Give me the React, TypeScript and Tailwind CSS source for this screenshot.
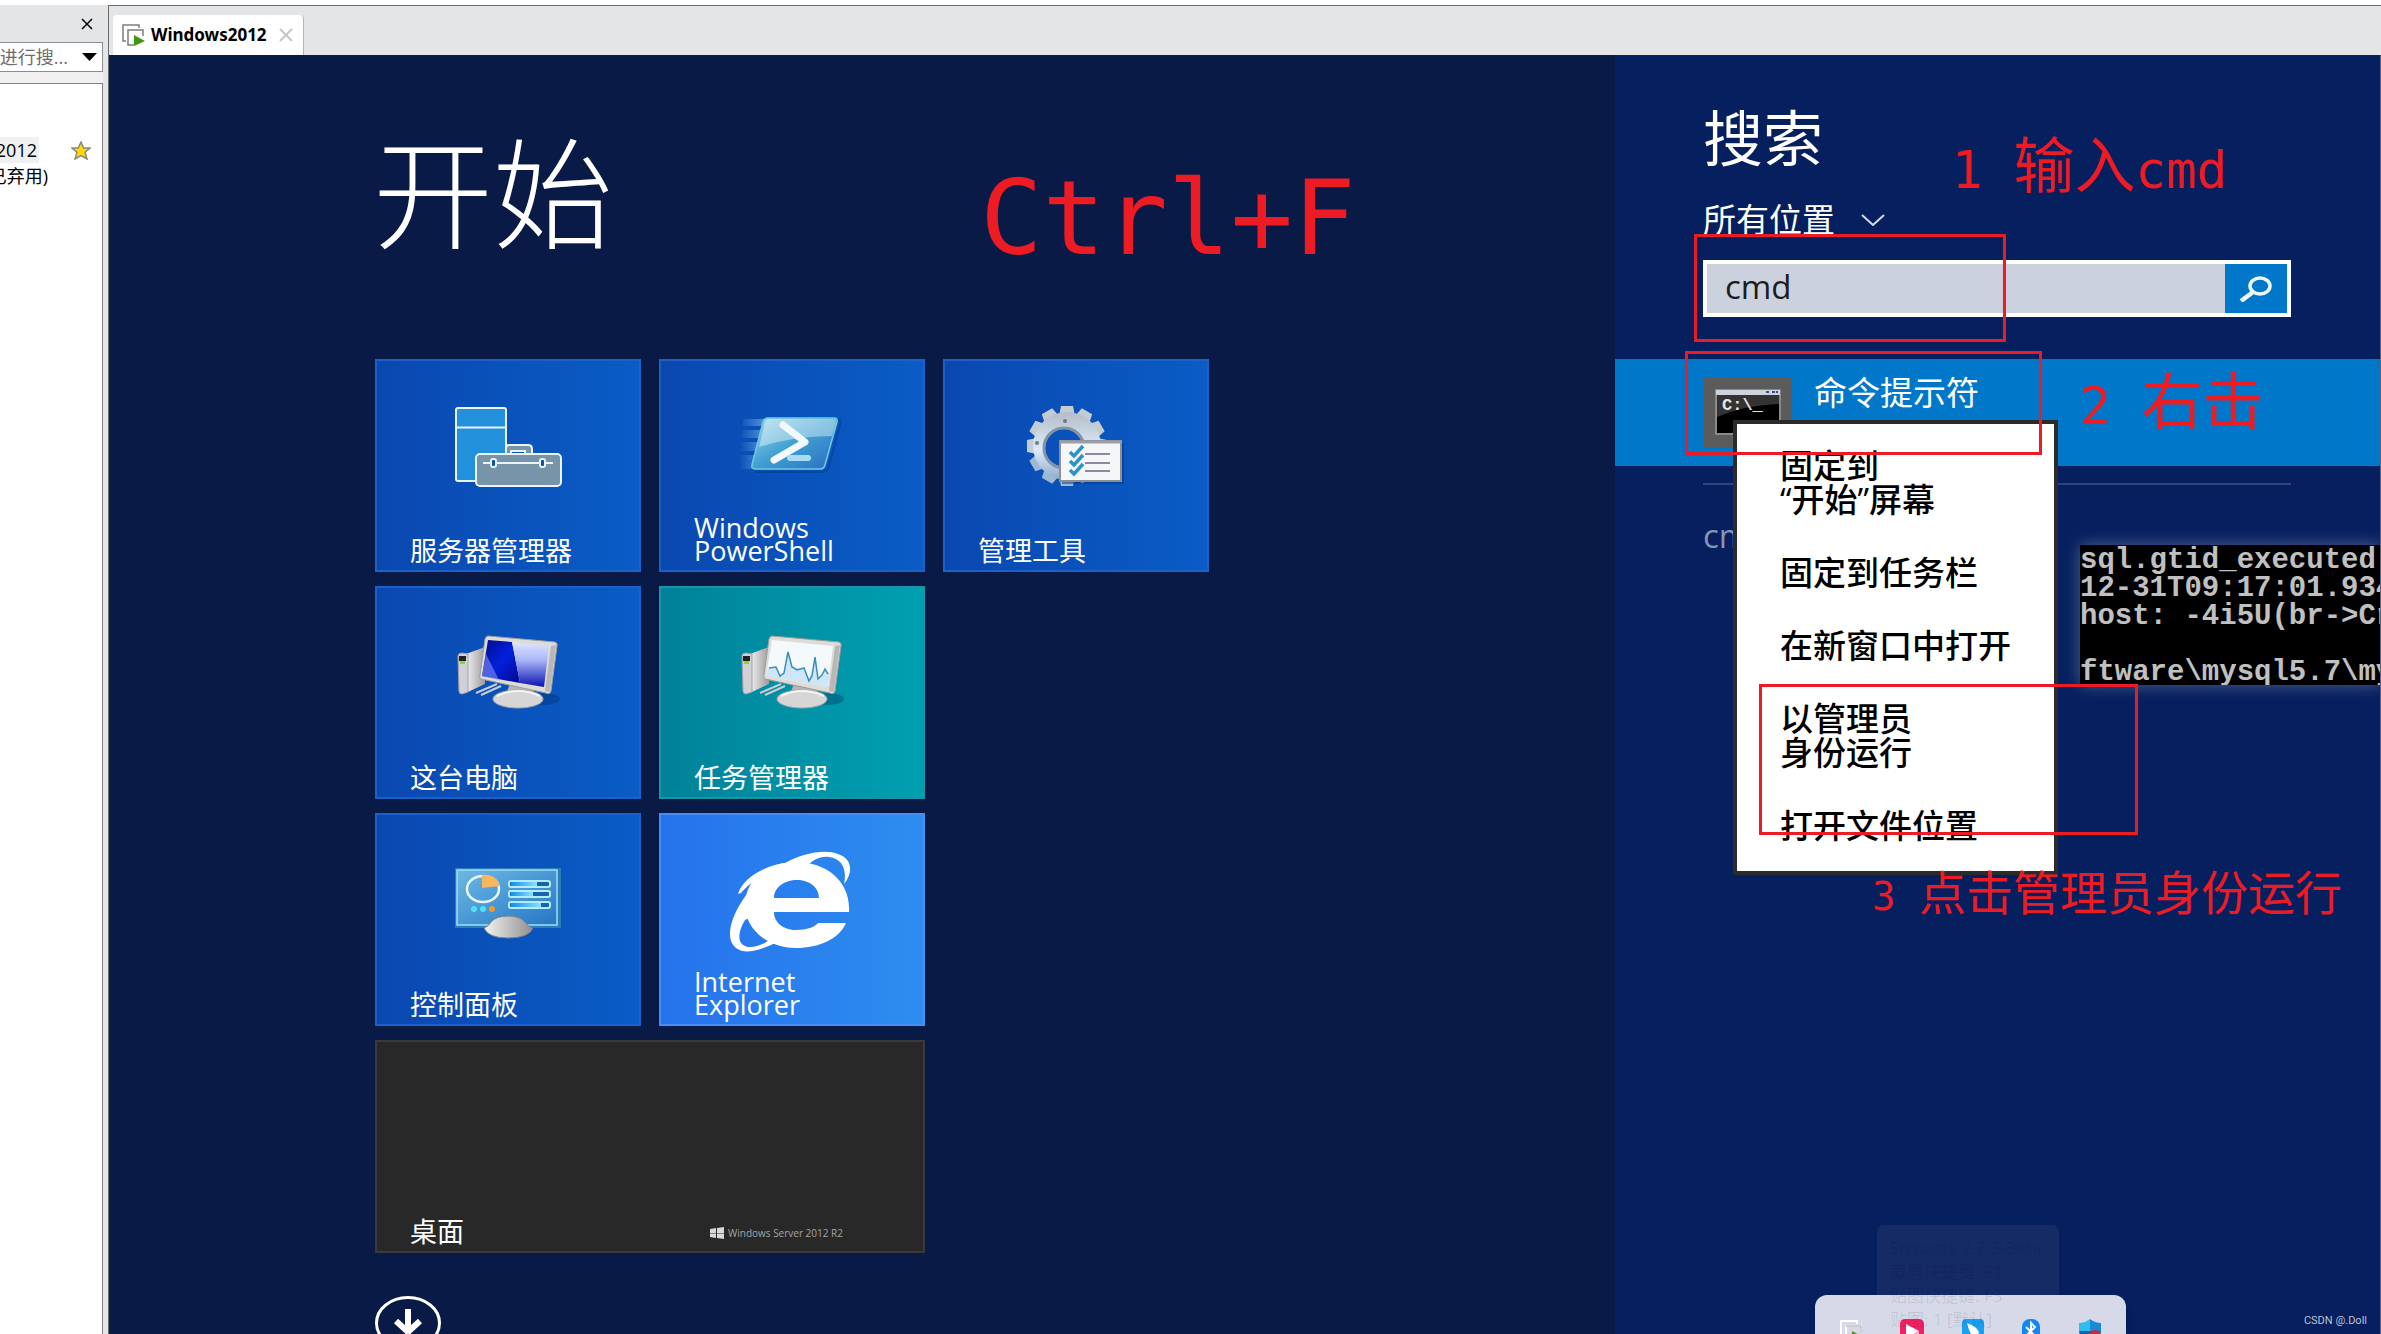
import React from 'react';

const UI = "font-['Open_Sans','Noto_Sans_CJK_SC',sans-serif]";

interface TileProps {
  label: string[];
  tone: string;
  children?: React.ReactNode;
  className?: string;
}

function Tile({ label, tone, children, className = '' }: TileProps) {
  return (
    <button type="button" className={`grid h-[213px] overflow-hidden border-2 text-left text-white ${tone} ${className}`}>
      <svg viewBox="2 2 262 209" className="col-start-1 row-start-1 size-full" fill="none">
        {children}
      </svg>
      <span className="col-start-1 row-start-1 self-end pb-2 pl-[33px] text-[27px] leading-[23px]">
        {label.map((line) => (
          <span key={line} className="block">{line}</span>
        ))}
      </span>
    </button>
  );
}

const BLUE = 'border-[#1b62c8] bg-linear-to-r from-[#0a48b0] to-[#0a5cc6]';
const TEAL = 'border-[#1a94a6] bg-linear-to-r from-[#008299] to-[#00a0b1]';
const SKY = 'border-[#4390f2] bg-linear-to-r from-[#2672ec] to-[#2e8def]';

function ServerIcon() {
  return (
    <g stroke="#e8f3fb" strokeWidth="2">
      <rect x="81" y="49" width="50" height="73" rx="2" fill="#2390dc" />
      <path d="M81 68.500H131" />
      <path d="M131 95V89Q131 86 134 86H153Q157 86 157 90V95" fill="#7894a8" />
      <path d="M136 95V92H150V95" fill="#0a52bb" />
      <rect x="101" y="95" width="85" height="32" rx="4" fill="#7894a8" />
      <path d="M108 104H178" />
      <rect x="116" y="100" width="5" height="8" rx="2" fill="#0a52bb" />
      <rect x="165" y="100" width="5" height="8" rx="2" fill="#0a52bb" />
    </g>
  );
}

function PowerShellIcon() {
  return (
    <>
      <defs>
        <linearGradient id="ps" x1="0" y1="0" x2="1" y2="1">
          <stop offset="0" stopColor="#9fd8ea" />
          <stop offset=".5" stopColor="#3f9fd2" />
          <stop offset="1" stopColor="#2a6cc0" />
        </linearGradient>
        <linearGradient id="streak">
          <stop offset="0" stopColor="#6fb4e6" stopOpacity="0" />
          <stop offset="1" stopColor="#6fb4e6" stopOpacity=".7" />
        </linearGradient>
      </defs>
      <path d="M84 60H107L105 67H84ZM83 71H104L102 79H82ZM82 83H100L98 92H81ZM81 96H97L93 110H80Z" fill="url(#streak)" />
      <path d="M110 61H181Q182 63 181 66L169 110Q167 113 163 113H96" stroke="#063a86" strokeWidth="2" opacity=".5" />
      <path d="M109 59H175Q179 59 178 63L166 106Q165 110 161 110H97Q92 110 93 106L104 63Q105 59 109 59Z" fill="url(#ps)" stroke="#72cbdc" strokeWidth="1.500" />
      <path d="M109 60H175Q178 60 177 63L173 77Q135 77 100 88L106 63Q107 60 109 60Z" fill="#fff" opacity=".4" />
      <path d="M124 66L146 83L115 101" stroke="#f2f9fc" strokeWidth="7" strokeLinecap="round" strokeLinejoin="round" />
      <path d="M131 99H149" stroke="#a8dcf3" strokeWidth="6" strokeLinecap="round" />
    </>
  );
}

function ToolsIcon() {
  const teeth = Array.from({ length: 12 }, (_, i) => i * 30);
  return (
    <>
      <defs>
        <linearGradient id="gear" x1="0" y1="0" x2="0" y2="1">
          <stop offset="0" stopColor="#b4bcc5" />
          <stop offset=".55" stopColor="#dcebfa" />
          <stop offset="1" stopColor="#8dacc9" />
        </linearGradient>
        <mask id="hole">
          <rect width="266" height="213" fill="#fff" />
          <circle cx="121" cy="89" r="19" fill="#000" />
        </mask>
      </defs>
      <g mask="url(#hole)">
        {teeth.map((angle) => (
          <path key={angle} d="M116 57L118 47H130L132 57Z" fill={angle > 90 && angle < 270 ? '#9db8d2' : '#c3cbd4'} transform={`rotate(${angle} 124 87)`} />
        ))}
        <circle cx="124" cy="87" r="34" fill="url(#gear)" />
      </g>
      <circle cx="121" cy="89" r="20" stroke="#8193a6" strokeWidth="3" />
      <circle cx="122" cy="62" r="2" fill="#6c7b8a" />
      <circle cx="94" cy="84" r="2" fill="#6c7b8a" />
      <rect x="119" y="84" width="62" height="41" fill="#06357f" opacity=".5" />
      <rect x="117" y="82" width="61" height="40" fill="#f5f6f7" stroke="#8c8f94" strokeWidth="2" />
      <path d="M117 83H178" stroke="#9aa0a6" strokeWidth="3" />
      <path d="M127 93L131 97L140 87M127 102L131 106L140 96M127 111L131 115L140 105" stroke="#2c94c4" strokeWidth="3.500" />
      <path d="M142 95H167M142 104H167M142 112H167" stroke="#8d86a4" strokeWidth="2" />
    </>
  );
}

function ComputerIcon({ graph = false }: { graph?: boolean }) {
  return (
    <>
      <defs>
        <linearGradient id="case" x1="0" y1="0" x2="1" y2="0">
          <stop offset="0" stopColor="#f1f1f1" />
          <stop offset="1" stopColor="#9c9c9c" />
        </linearGradient>
        <linearGradient id="shine" x1="0" y1="0" x2="0" y2="1">
          <stop offset="0" stopColor="#dfe6ff" />
          <stop offset=".4" stopColor="#a9b6f8" />
          <stop offset="1" stopColor="#0b12b4" />
        </linearGradient>
        <linearGradient id="deep" x1="0" y1="0" x2="1" y2="1">
          <stop offset="0" stopColor="#030a86" />
          <stop offset=".5" stopColor="#0220dc" />
          <stop offset="1" stopColor="#020a90" />
        </linearGradient>
      </defs>
      <ellipse cx="168" cy="113" rx="17" ry="6" fill="#012a5e" opacity=".35" />
      <path d="M101 107L122 98M106 109L126 100" stroke="#c9cdd2" strokeWidth="2" />
      <path d="M91 68L110 61V98L93 106Z" fill="url(#case)" />
      <path d="M83 70Q83 67 87 67L93 68V106L87 108Q84 108 84 105Z" fill="#d0d0d6" stroke="#a2a2aa" />
      <rect x="84" y="70" width="7" height="5" fill="#222" />
      <rect x="85" y="75" width="5" height="3" fill="#7be02a" />
      <path d="M135 98L157 102L160 110L130 110Z" fill="#b5b5b5" />
      <ellipse cx="143" cy="113" rx="25" ry="9" fill="#d6d6d6" stroke="#a9a9a9" />
      <path d="M122 110Q143 100 165 110" stroke="#f4f4f4" strokeWidth="2" />
      <path d="M113 50L180 56Q183 57 182 60L176 105Q175 109 171 107L106 93Q104 92 105 89L110 53Q111 50 113 50Z" fill="#dedcd8" stroke="#9d9c9a" />
      <path d="M176 60L181 59L175 106L170 105Z" fill="#b9b8b6" />
      {graph ? (
        <>
          <path d="M113 54L174 60L169 101L107 90Z" fill="#f4f9fc" />
          <path d="M109 82L117 81L121 90L125 87L129 68L133 81L145 83L150 94L156 74L159 93L166 84L171 88L169 101L107 90Z" fill="#cfe6f4" />
          <path d="M110 82L117 81L121 90L125 87L129 66L133 81L138 84L145 82L150 95L153 90L156 71L159 93L163 89L166 83L169 88" stroke="#3a8dbd" strokeWidth="1.500" />
        </>
      ) : (
        <>
          <path d="M113 54L137 56L145 97L107 90Z" fill="url(#deep)" />
          <path d="M137 56L174 60L169 101L145 97Z" fill="url(#shine)" />
          <path d="M111 68L124 94L107 90Z" fill="#8490f0" opacity=".6" />
        </>
      )}
    </>
  );
}

function ControlPanelIcon() {
  return (
    <>
      <defs>
        <linearGradient id="panel" x1="0" y1="0" x2="1" y2="1">
          <stop offset="0" stopColor="#6db9e4" />
          <stop offset="1" stopColor="#2577c4" />
        </linearGradient>
        <linearGradient id="dome">
          <stop offset="0" stopColor="#f4f4f4" />
          <stop offset="1" stopColor="#8e8e8e" />
        </linearGradient>
        <linearGradient id="bar">
          <stop offset="0" stopColor="#1192e4" />
          <stop offset="1" stopColor="#8fe0fb" />
        </linearGradient>
      </defs>
      <rect x="80" y="55" width="106" height="60" fill="#2b7fb8" />
      <rect x="82" y="57" width="100" height="55" fill="url(#panel)" stroke="#a4dcf4" strokeWidth="1.500" />
      <ellipse cx="108" cy="76" rx="16" ry="13" stroke="#e7f6fd" strokeWidth="2.500" />
      <path d="M107 62Q122 61 125 73L107 75Z" fill="#f8b75f" />
      <circle cx="99" cy="96" r="3" fill="#4ce0fa" />
      <circle cx="108" cy="96" r="3" fill="#4ce0fa" />
      <circle cx="117" cy="96" r="3" fill="#f59a2c" />
      {[71, 81, 92].map((y, i) => (
        <g key={y}>
          <rect x="134" y={y - 3} width="41" height="6" rx="2" fill="#1b62ae" stroke="#b0ecfc" strokeWidth="2" />
          <rect x="136" y={y - 2} width={[26, 22, 30][i]} height="4" fill="url(#bar)" />
        </g>
      ))}
      <path d="M109 115Q114 113 116 109Q121 103 133 103Q145 103 150 109Q153 114 158 115Q154 125 133 125Q113 125 109 115Z" fill="url(#dome)" stroke="#7b7f84" />
    </>
  );
}

function ExplorerIcon() {
  return (
    <g fill="#fff">
      <path fillRule="evenodd" d="M137 49C168 49 192 69 190 99H115C115 110 125 117 137 117C148 117 156 114 159 110H187C180 126 160 135 137 135C106 135 86 114 86 92C86 68 106 49 137 49ZM115 85H160C160 74 150 67 138 67C126 67 115 74 115 85Z" />
      <path d="M79 81C84 64 106 53 126 50C144 40 166 36 179 41C194 46 194 60 185 71C188 57 184 46 170 44C162 43 156 46 150 51L126 58L105 63C95 67 88 73 82 80Z" />
      <path d="M105 63C88 78 73 99 71 119C70 137 84 141 98 137C106 135 112 132 118 129L109 128C98 135 85 137 81 128C79 121 82 114 86 107L100 100Z" />
    </g>
  );
}

function Sidebar() {
  return (
    <aside className={`flex w-[108px] shrink-0 flex-col overflow-hidden bg-[#e4e5e7] pr-[5px] text-lg text-black ${UI}`}>
      <div className="flex h-[37px] items-center justify-end pr-2.5">
        <button type="button" aria-label="关闭">
          <svg width="12" height="12" viewBox="0 0 12 12" stroke="#000" strokeWidth="1.500"><path d="M1 1L11 11M11 1L1 11" /></svg>
        </button>
      </div>
      <div className="flex h-[30px] items-center justify-end gap-[14px] border border-l-0 border-[#8c8c8c] bg-white pr-[5px]">
        <span className="flex shrink-0 whitespace-nowrap text-[#6d6d6d]">字进行搜...</span>
        <svg className="shrink-0" width="15" height="8" viewBox="0 0 15 8"><path d="M0 0H15L7.500 8Z" /></svg>
      </div>
      <div className="h-[11px] bg-[#f0f0f0]" />
      <ul className="flex-1 border-t border-r border-[#828282] bg-white pt-[53px] leading-[26px]">
        <li className="flex items-center justify-between pr-[11px]">
          <span className="flex w-[39px] justify-end bg-[#f0f0f0] pr-[2px]">2012</span>
          <svg width="20" height="19" viewBox="0 0 20 19"><path d="M10 1L12.700 7H19L14 11.300L16 18L10 14.500L4 18L6 11.300L1 7H7.300Z" fill="#ffd90a" stroke="#8b8b7c" strokeWidth="1.500" /></svg>
        </li>
        <li className="flex w-[48px] justify-end whitespace-nowrap">已弃用)</li>
      </ul>
    </aside>
  );
}

function TabBar() {
  return (
    <div className="flex h-[50px] shrink-0 items-end border-t border-[#6b6b6b] bg-[#e4e5e7] pl-1">
      <div className="flex h-10 w-[191px] items-center rounded-t border-r border-[#b5b5b5] bg-white pl-[9px]">
        <svg width="23" height="22" viewBox="0 0 23 22" fill="none">
          <path d="M4 17H1V1H17V4" stroke="#7b7f80" strokeWidth="1.500" />
          <path d="M12 21H6V6H21V12" stroke="#7b7f80" strokeWidth="1.500" />
          <path d="M12 11L23 17L12 22Z" fill="#43960f" />
        </svg>
        <span className="ml-1.5 font-['Noto_Sans',sans-serif] text-[17px] font-bold text-black">Windows2012</span>
        <button type="button" aria-label="关闭标签" className="ml-auto mr-[10px]">
          <svg width="14" height="14" viewBox="0 0 14 14" stroke="#c6c6c6" strokeWidth="2"><path d="M1 1L13 13M13 1L1 13" /></svg>
        </button>
      </div>
    </div>
  );
}

function StartScreen() {
  return (
    <section className="min-w-0 flex-1 overflow-hidden bg-[#081a45] pl-[264px] text-white">
      <h1 className="mt-[62px] mb-[88px] text-[120px] leading-[154px] font-light">开始</h1>
      <div className="ml-[2px] grid w-[834px] grid-cols-3 gap-x-[18px] gap-y-[14px]">
        <Tile label={['服务器管理器']} tone={BLUE}><ServerIcon /></Tile>
        <Tile label={['Windows', 'PowerShell']} tone={BLUE}><PowerShellIcon /></Tile>
        <Tile label={['管理工具']} tone={BLUE}><ToolsIcon /></Tile>
        <Tile label={['这台电脑']} tone={BLUE}><ComputerIcon /></Tile>
        <Tile label={['任务管理器']} tone={TEAL} className="col-start-2"><ComputerIcon graph /></Tile>
        <Tile label={['控制面板']} tone={BLUE} className="col-start-1"><ControlPanelIcon /></Tile>
        <Tile label={['Internet', 'Explorer']} tone={SKY}><ExplorerIcon /></Tile>
        <button type="button" className="col-span-2 col-start-1 flex h-[213px] items-end border-2 border-[#3a3a3a] bg-[#282828] pb-2 pl-[33px]">
          <span className="w-[300px] text-left text-[27px] leading-[23px]">桌面</span>
          <span className="flex items-center gap-1 text-[10px] leading-5 text-[#a5a5a5]">
            <svg width="14" height="12" viewBox="0 0 14 12" fill="#d8d8d8"><path d="M0 2L6 1V6H0ZM7 1L14 0V6H7ZM0 6.500H6V11L0 10ZM7 6.500H14V12L7 11Z" /></svg>
            Windows Server 2012 R2
          </span>
        </button>
      </div>
      <button type="button" aria-label="所有应用" className="mt-[43px] ml-[2px] block">
        <svg width="66" height="54" viewBox="0 0 66 54" fill="none" stroke="#fff">
          <ellipse cx="33" cy="27" rx="31.500" ry="25.500" strokeWidth="3" />
          <path d="M33 13V36M21 25L33 36L45 25" strokeWidth="6" />
        </svg>
      </button>
    </section>
  );
}

const MENU = [['固定到', '“开始”屏幕'], ['固定到任务栏'], ['在新窗口中打开'], ['以管理员', '身份运行'], ['打开文件位置']];

function ContextMenu() {
  return (
    <ul className="absolute top-[365px] left-[118px] flex w-[325px] flex-col gap-[39px] border-4 border-[#2b2b2b] bg-white pt-[25px] pb-7 pl-[43px] text-[33px] leading-[34px] font-medium text-black">
      {MENU.map((lines) => (
        <li key={lines[0]}>
          <button type="button" className="block text-left">
            {lines.map((line) => (
              <span key={line} className="block">{line}</span>
            ))}
          </button>
        </li>
      ))}
    </ul>
  );
}

function SearchPane() {
  return (
    <section className="relative w-[766px] shrink-0 overflow-hidden border-r border-[#5a6580] bg-[#051f5f] text-white">
      <div className="pr-[89px] pl-[88px]">
        <h2 className="pt-[47px] text-[60px] leading-[72px]">搜索</h2>
        <button type="button" className="mt-[26px] flex items-center gap-[26px] text-[33px] leading-10">
          所有位置
          <svg width="24" height="12" viewBox="0 0 24 12" fill="none" stroke="#d5dbe8" strokeWidth="2"><path d="M1 1L12 11L23 1" /></svg>
        </button>
        <div className="mt-5 flex h-[57px] border-4 border-white bg-[#ccd1de]">
          <input aria-label="搜索" defaultValue="cmd" className="min-w-0 flex-1 pb-1 pl-[18px] text-[33px] text-[#1c1c1c] outline-none" />
          <button type="button" aria-label="开始搜索" className="flex w-[62px] items-center justify-center bg-[#0077c8]">
            <svg width="34" height="26" viewBox="0 0 34 26" fill="none" stroke="#f0f7fc" strokeWidth="3.500">
              <ellipse cx="21" cy="10" rx="10" ry="8" />
              <path d="M14 16L2 25" strokeWidth="4.500" />
            </svg>
          </button>
        </div>
      </div>
      <div className="mt-[42px] flex h-[107px] gap-[22px] bg-[#0077c8] pl-[88px]">
        <div className="mt-[18px] flex h-[70px] w-[89px] items-center justify-center bg-[#5b5b5b]">
          <svg width="66" height="46" viewBox="0 0 66 46">
            <rect width="66" height="46" rx="1" fill="#8a8a8a" />
            <rect x="1" y="1" width="64" height="5" fill="#ccd3dc" />
            <path d="M51 3H54M57 3H60M61 3H63" stroke="#37507c" strokeWidth="2" />
            <rect x="2" y="6" width="62" height="38" fill="#000" />
            <path d="M2 6H64V15Q30 16 2 28Z" fill="#333" />
            <text x="7" y="21" className="font-['Liberation_Mono',monospace] text-[17px] font-bold" fill="#e6e6e6">C:\_</text>
          </svg>
        </div>
        <span className="mt-[14px] text-[33px] leading-10">命令提示符</span>
      </div>
      <div className="mt-[17px] mr-[89px] ml-[88px] border-t-2 border-[#30457b]" />
      <p className="mt-[29px] ml-[88px] text-[33px] leading-[44px] text-[#8794b5]">cmd</p>
      <ContextMenu />
      <pre className="absolute top-[490px] left-[465px] h-[140px] w-[301px] overflow-hidden bg-black pt-[2px] font-['Liberation_Mono',monospace] text-[29px] leading-7 font-bold text-[#c0c0c0] shadow-[0_0_16px_rgba(255,255,255,0.3)]">
        {'sql.gtid_executed\n12-31T09:17:01.934\nhost: -4i5U(br->Cr\n\nftware\\mysql5.7\\my'}
      </pre>
    </section>
  );
}

// Red marks drawn over the desktop
function Annotations() {
  const mono = "font-['DejaVu_Sans_Mono',monospace]";
  return (
    <div className="pointer-events-none absolute inset-0 whitespace-pre text-[#ed1c24]">
      <div className={`absolute top-[158px] left-[980px] text-[104px] leading-[120px] ${mono}`}>Ctrl+F</div>
      <div className="absolute top-[127px] left-[1952px] text-[61px] leading-[76px]">
        <span className={`text-[51px] ${mono}`}>1 </span>输入<span className={`text-[51px] ${mono}`}>cmd</span>
      </div>
      <div className="absolute top-[363px] left-[2080px] text-[61px] leading-[76px]">
        <span className={`text-[51px] ${mono}`}>2 </span>右击
      </div>
      <div className="absolute top-[862px] left-[1872px] text-[47px] leading-[60px]">
        <span className={`text-[39px] ${mono}`}>3 </span>点击管理员身份运行
      </div>
      <div className="absolute top-[234px] left-[1694px] h-[108px] w-[312px] border-3 border-[#ed1c24]" />
      <div className="absolute top-[351px] left-[1685px] h-[104px] w-[357px] border-3 border-[#ed1c24]" />
      <div className="absolute top-[684px] left-[1759px] h-[151px] w-[379px] border-3 border-[#ed1c24]" />
    </div>
  );
}

function TrayPopup() {
  return (
    <>
      <div className="absolute top-[1225px] left-[1877px] h-[109px] w-[182px] rounded-t-md bg-[#152b66]" />
      <div className="absolute top-[1295px] left-[1815px] flex h-[39px] w-[311px] items-start justify-between overflow-hidden rounded-t-xl bg-[#d6dae8] px-6 pt-6 shadow-lg">
        <svg width="24" height="24" viewBox="0 0 24 24" fill="none">
          <path d="M5 19H2V2H18V5M13 22H7V7H22V14" stroke="#fff" strokeWidth="2" />
          <path d="M7 7H22V14" stroke="#9aa0a6" />
          <path d="M13 12L24 18L13 24Z" fill="#43960f" />
        </svg>
        <svg width="24" height="24" viewBox="0 0 24 24">
          <rect width="24" height="24" rx="5" fill="#f31f63" />
          <path d="M6 5L19 12L6 20Z" fill="#fff" />
          <path d="M6 20L19 12V18Z" fill="#f9a9c4" />
        </svg>
        <svg width="22" height="22" viewBox="0 0 22 22">
          <rect width="22" height="22" rx="4" fill="#18a0f2" />
          <path d="M5 4Q14 7 17 13L15 20L10 17Q6 10 5 4Z" fill="#fff" />
        </svg>
        <svg width="20" height="26" viewBox="0 0 20 26" fill="none">
          <rect x="1" width="18" height="26" rx="8" fill="#1186fa" />
          <path d="M5 8L14 17L10 21V4L14 8L5 17" stroke="#fff" strokeWidth="2" />
        </svg>
        <svg width="24" height="24" viewBox="0 0 24 24">
          <path d="M12 0Q17 4 23 4V12H12Z" fill="#1b8ad6" />
          <path d="M12 0Q7 4 1 4V12H12Z" fill="#31bdf0" />
          <path d="M1 12H23Q22 20 12 24Q2 20 1 12Z" fill="#0f63b4" />
          <circle cx="17" cy="17" r="6" fill="#dc2430" />
        </svg>
      </div>
      <div className="absolute top-[1236px] left-[1890px] h-[98px] overflow-hidden text-[17px] leading-6 whitespace-nowrap text-black/10">
        <p>Snipaste 2.7.3-Beta</p>
        <p>截屏快捷键: F1</p>
        <p>贴图快捷键: F3</p>
        <p>贴图: 1 [默认]</p>
      </div>
      <p className="absolute right-[14px] bottom-[5px] font-['Roboto',sans-serif] text-[11px] leading-4 text-[#bcc3d4]">CSDN @.Doll</p>
    </>
  );
}

export default function App() {
  return (
    <main className={`relative flex h-screen flex-col overflow-hidden bg-white pt-[5px] ${UI}`}>
      <div className="flex min-h-0 flex-1">
        <Sidebar />
        <div className="flex min-w-0 flex-1 flex-col border-l border-[#6b6b6b]">
          <TabBar />
          <div className="flex min-h-0 flex-1">
            <StartScreen />
            <SearchPane />
          </div>
        </div>
      </div>
      <TrayPopup />
      <Annotations />
    </main>
  );
}
